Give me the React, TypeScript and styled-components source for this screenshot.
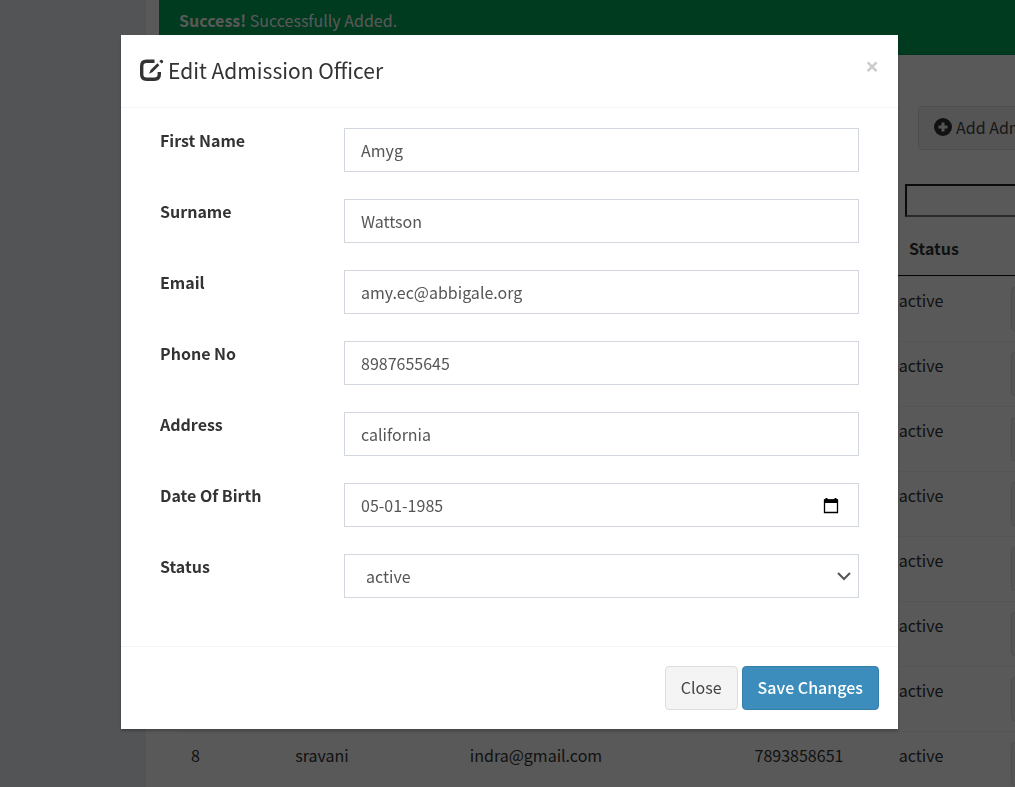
import React from 'react';
import styled, { createGlobalStyle } from 'styled-components';

const GlobalStyle = createGlobalStyle`
  *, *::before, *::after { box-sizing: border-box; }
  body {
    margin: 0;
    background: #fff;
    color: #333;
    font-family: "Noto Sans CJK SC", "Noto Sans", sans-serif;
    font-size: 16px;
    line-height: 24px;
  }
  button, input, select { font: inherit; }
`;

const Page = styled.div`
  display: flex;
  height: 100vh;
  overflow: hidden;
`;

const Sidebar = styled.aside`
  flex: 0 0 146px;
  background: #ecf0f5;
`;

const Content = styled.main`
  flex: 1;
  min-width: 0;
  padding-left: 13px;
`;

const Alert = styled.div`
  padding: 8px 20px 22px;
  border-bottom: 1px solid #008d4c;
  background: #00a65a;
  color: #fff;
`;

const Toolbar = styled.div<{ $indent: number; $top: number }>`
  display: flex;
  overflow: hidden;
  margin-top: ${p => p.$top}px;
  padding-left: ${p => p.$indent}px;
`;

const Button = styled.button<{ $primary?: boolean }>`
  display: inline-flex;
  flex: none;
  align-items: center;
  gap: 4px;
  height: 44px;
  padding: 0 15px 2px;
  border: 1px solid ${p => (p.$primary ? '#367fa9' : '#ddd')};
  border-radius: 4px;
  background: ${p => (p.$primary ? '#3c8dbc' : '#f4f4f4')};
  color: ${p => (p.$primary ? '#fff' : '#444')};
  font-weight: ${p => (p.$primary ? 500 : 400)};
  white-space: nowrap;
`;

const SearchInput = styled.input`
  flex: none;
  width: 210px;
  height: 33px;
  border: 2px inset #767676;
  background: #fff;
`;

const TableWrap = styled.div`
  overflow: hidden;
  padding: 5px 0 0 19px;
`;

const Table = styled.table`
  width: 900px;
  table-layout: fixed;
  border-collapse: separate;
  border-spacing: 0;
  text-align: center;
`;

const HeadCell = styled.th<{ $width: number }>`
  width: ${p => p.$width}px;
  height: 54px;
  padding: 0 0 2px 26px;
  border-bottom: 1px solid #111;
  font-weight: 700;
`;

const Cell = styled.td`
  height: 65px;
  padding: 11px 0 0;
  border-top: 1px solid #f4f4f4;
  vertical-align: top;
`;

const ActionCell = styled(Cell)`
  padding-left: 43px;
  padding-top: 10px;
  text-align: left;
`;

const Backdrop = styled.div`
  position: fixed;
  inset: 0;
  overflow: auto;
  padding: 35px 117px 35px 121px;
  background: rgba(0, 0, 0, 0.65);
`;

const Dialog = styled.section`
  background: #fff;
  box-shadow: 0 2px 3px rgba(0, 0, 0, 0.25);
`;

const DialogHeader = styled.header`
  display: flex;
  align-items: flex-start;
  justify-content: space-between;
  padding: 19px;
  height: 73px;
  border-bottom: 1px solid #f4f4f4;
`;

const Title = styled.h4`
  display: flex;
  align-items: center;
  gap: 4px;
  margin: 0;
  font-size: 21px;
  font-weight: 400;
  line-height: 32px;
`;

const CloseMark = styled.button`
  padding: 0;
  border: 0;
  background: none;
  color: #ccc;
  font-family: "Open Sans", sans-serif;
  font-size: 24px;
  font-weight: 700;
  line-height: 24px;
`;

const Form = styled.form`
  display: grid;
  gap: 27px;
  padding: 20px 39px 48px;
`;

const Row = styled.div`
  display: grid;
  grid-template-columns: 184px 1fr;
`;

const Label = styled.label`
  font-weight: 700;
`;

const Field = styled.div`
  position: relative;
`;

const TextInput = styled.input`
  display: block;
  width: 100%;
  height: 44px;
  padding: 0 16px;
  border: 1px solid #d2d6de;
  border-radius: 0;
  background: #fff;
  color: #555;
`;

const Select = styled.select`
  display: block;
  width: 100%;
  height: 44px;
  padding: 0 21px;
  border: 1px solid #d2d6de;
  border-radius: 0;
  background: #fff;
  color: #555;
  appearance: none;
`;

const CalendarButton = styled.button`
  position: absolute;
  top: 12px;
  right: 17px;
  display: flex;
  padding: 1px;
  border: 0;
  background: none;
`;

const Chevron = styled.svg`
  position: absolute;
  top: 18px;
  right: 8px;
  pointer-events: none;
`;

const DialogFooter = styled.footer`
  display: flex;
  justify-content: flex-end;
  gap: 4px;
  padding: 19px;
  border-top: 1px solid #f4f4f4;
`;

const EditIcon = () => (
  <svg width="24" height="24" viewBox="0 0 24 24" aria-hidden="true">
    <path
      d="M14.500 3.300H6.500Q1.700 3.300 1.700 8V16.500Q1.700 21.200 6.500 21.200H14.500Q19.300 21.200 19.300 16.500V14"
      fill="none"
      stroke="#333"
      strokeWidth="3.400"
    />
    <path d="M9 15.800L10.600 12L17.400 5.200L19.400 7.200L12.600 14Z" fill="#333" />
    <path d="M19.300 3.300L20.600 2Q21.400 1.300 22.200 2L22.900 2.700Q23.600 3.500 22.900 4.300L21.600 5.600Z" fill="#333" />
  </svg>
);

const PlusIcon = () => (
  <svg width="18" height="18" viewBox="0 0 18 18" aria-hidden="true">
    <circle cx="9" cy="9" r="9" fill="#333" />
    <path d="M9 4.500V13.500M4.500 9H13.500" stroke="#f4f4f4" strokeWidth="3" />
  </svg>
);

const columns = [
  { title: '', width: 35 },
  { title: '', width: 218 },
  { title: '', width: 210 },
  { title: '', width: 83 },
  { title: '', width: 150 },
  { title: 'Status', width: 94 },
  { title: '', width: 110 },
];

const officers = [
  ...Array.from({ length: 7 }, () => ['', '', '', '', '', 'active']),
  ['8', 'sravani', 'indra@gmail.com', '', '7893858651', 'active'],
];

const fields = [
  { id: 'first-name', label: 'First Name', value: 'Amyg' },
  { id: 'surname', label: 'Surname', value: 'Wattson' },
  { id: 'email', label: 'Email', value: 'amy.ec@abbigale.org' },
  { id: 'phone', label: 'Phone No', value: '8987655645' },
  { id: 'address', label: 'Address', value: 'california' },
];

export default function App() {
  return (
    <>
      <GlobalStyle />
      <Page>
        <Sidebar />
        <Content>
          <Alert>
            <strong>Success!</strong> Successfully Added.
          </Alert>
          <Toolbar $top={51} $indent={759}>
            <Button type="button">
              <PlusIcon />
              Add Admission Officer
            </Button>
          </Toolbar>
          <Toolbar $top={34} $indent={746}>
            <SearchInput type="search" aria-label="Search" />
          </Toolbar>
          <TableWrap>
            <Table>
              <thead>
                <tr>
                  {columns.map((column, i) => (
                    <HeadCell key={i} $width={column.width}>{column.title}</HeadCell>
                  ))}
                </tr>
              </thead>
              <tbody>
                {officers.map((officer, i) => (
                  <tr key={i}>
                    {officer.map((value, j) => (
                      <Cell key={j}>{value}</Cell>
                    ))}
                    <ActionCell>
                      <Button type="button" aria-label="Edit" />
                    </ActionCell>
                  </tr>
                ))}
              </tbody>
            </Table>
          </TableWrap>
        </Content>
      </Page>
      <Backdrop>
        <Dialog role="dialog" aria-modal="true" aria-labelledby="dialog-title">
          <DialogHeader>
            <Title id="dialog-title">
              <EditIcon />
              Edit Admission Officer
            </Title>
            <CloseMark type="button" aria-label="Close">×</CloseMark>
          </DialogHeader>
          <Form id="officer-form">
            {fields.map(field => (
              <Row key={field.id}>
                <Label htmlFor={field.id}>{field.label}</Label>
                <TextInput id={field.id} defaultValue={field.value} />
              </Row>
            ))}
            <Row>
              <Label htmlFor="birth-date">Date Of Birth</Label>
              <Field>
                <TextInput id="birth-date" inputMode="numeric" defaultValue="05-01-1985" />
                <CalendarButton type="button" aria-label="Choose date">
                  <svg width="20" height="20" viewBox="0 0 20 20" aria-hidden="true">
                    <path d="M3.500 4H16.500V16.500H3.500Z" fill="none" stroke="#000" strokeWidth="1.300" />
                    <path d="M3 3.500H17V7H3ZM4.500 2H6.500V4H4.500ZM13.500 2H15.500V4H13.500Z" />
                  </svg>
                </CalendarButton>
              </Field>
            </Row>
            <Row>
              <Label htmlFor="status">Status</Label>
              <Field>
                <Select id="status" defaultValue="active">
                  <option>active</option>
                </Select>
                <Chevron width="14" height="9" viewBox="0 0 14 9" aria-hidden="true">
                  <path d="M1 1L7 7L13 1" fill="none" stroke="#555" strokeWidth="2" />
                </Chevron>
              </Field>
            </Row>
          </Form>
          <DialogFooter>
            <Button type="button">Close</Button>
            <Button type="submit" form="officer-form" $primary>Save Changes</Button>
          </DialogFooter>
        </Dialog>
      </Backdrop>
    </>
  );
}
